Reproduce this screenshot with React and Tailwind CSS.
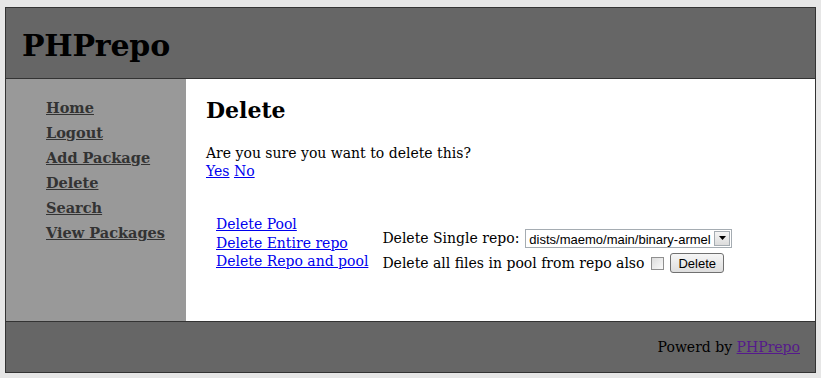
import { useState } from "react";

const serif = { fontFamily: '"DejaVu Serif", Georgia, serif' };
const sans = { fontFamily: '"Liberation Sans", Arial, sans-serif' };

const menu = ["Home", "Logout", "Add Package", "Delete", "Search", "View Packages"];

export default function App() {
  const [repo, setRepo] = useState("dists/maemo/main/binary-armel");

  return (
    <div className="min-h-[378px] bg-[#e6e6e6] pt-[7px] pl-[5px]" style={serif}>
      <div className="w-[811px] border border-[#333]">
        {/* header */}
        <div className="h-[71px] bg-[#666] border-b border-[#333] flex items-center pl-[16px] pt-[4px]">
          <h1 className="text-[30px] font-bold text-black tracking-[-0.2px]">PHPrepo</h1>
        </div>

        <div className="flex">
          {/* sidebar */}
          <div className="w-[180px] bg-[#999] pl-[40px] pt-[16px] flex flex-col">
            {menu.map((m) => (
              <a key={m} href="#" className="text-[14.5px] font-bold text-[#333] underline leading-[25px]">
                {m}
              </a>
            ))}
          </div>

          {/* content */}
          <div className="flex-1 bg-white h-[242px] pl-[20px] pt-[16px] text-[14px] text-black">
            <h2 className="text-[22px] font-bold leading-[30px]">Delete</h2>
            <p className="mt-[19px] leading-[18px]">Are you sure you want to delete this?</p>
            <div className="leading-[18px]">
              <a href="#" className="text-[#00e] underline">Yes</a>{" "}
              <a href="#" className="text-[#00e] underline">No</a>
            </div>

            <div className="flex items-start mt-[35px] pl-[10px]">
              <div className="flex flex-col leading-[18.5px] mr-[14px]">
                <a href="#" className="text-[#00e] underline">Delete Pool</a>
                <a href="#" className="text-[#00e] underline">Delete Entire repo</a>
                <a href="#" className="text-[#00e] underline">Delete Repo and pool</a>
              </div>
              <div className="flex flex-col gap-[5px] pt-[13px]">
                <div className="flex items-center h-[20px]">
                  <span>Delete Single repo:</span>
                  <div className="ml-[6px] flex items-center h-[19px] border border-[#a5acb2] bg-white">
                    <select
                      value={repo}
                      onChange={(e) => setRepo(e.target.value)}
                      className="appearance-none h-full pl-[3px] pr-[3px] text-[13px] text-black outline-none bg-white"
                      style={sans}
                    >
                      <option>dists/maemo/main/binary-armel</option>
                    </select>
                    <div className="w-[16px] h-[15px] mr-[1px] border border-[#a5acb2] bg-gradient-to-b from-[#f5f5f5] to-[#dcdcdc] flex items-center justify-center">
                      <svg width="7" height="4" viewBox="0 0 7 4"><path d="M0 0h7L3.5 4z" fill="#000" /></svg>
                    </div>
                  </div>
                </div>
                <div className="flex items-center h-[20px]">
                  <span>Delete all files in pool from repo also</span>
                  <span className="ml-[7px] w-[13px] h-[13px] border border-[#8f8f8f] bg-gradient-to-br from-[#dcdcdc] to-[#fafafa]"></span>
                  <button
                    className="ml-[6px] h-[20px] px-[7px] border border-[#707070] rounded-[3px] bg-gradient-to-b from-[#f6f6f6] to-[#dedede] text-[13px] text-black leading-none"
                    style={sans}
                  >
                    Delete
                  </button>
                </div>
              </div>
            </div>
          </div>
        </div>

        {/* footer */}
        <div className="h-[51px] bg-[#666] border-t border-[#333] flex items-center justify-end pr-[15px] text-[14px] text-black">
          <span>
            Powerd by <a href="#" className="text-[#551a8b] underline">PHPrepo</a>
          </span>
        </div>
      </div>
    </div>
  );
}
